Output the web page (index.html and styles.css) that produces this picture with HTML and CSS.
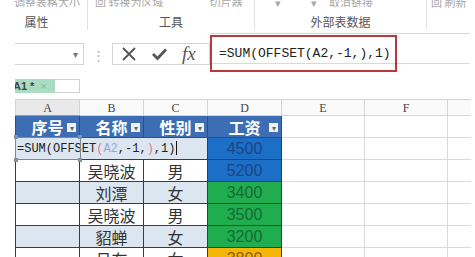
FILE: index.html
```html
<!DOCTYPE html>
<html lang="zh-cn">
<head>
    <meta charset="UTF-8">
    <title>OFFSET 求和</title>
    <link rel="stylesheet" href="styles.css">
</head>
<body>
    <div class="ribbon">
        <div class="grp g1"><div class="cmd">调整表格大小</div><div class="lbl">属性</div></div>
        <div class="grp g2"><div class="cmd"><span>回 转换为区域</span><span class="c2">切片器</span></div><div class="lbl">工具</div></div>
        <div class="grp g3"><div class="cmd"><span>▾</span><span class="c2">▾</span><span class="c3">取消链接</span></div><div class="lbl">外部表数据</div></div>
        <div class="grp g4"><div class="cmd">回 刷新</div><div class="lbl"></div></div>
    </div>

    <div class="fbar">
        <div class="namebox"><span class="arrow">▾</span></div>
        <div class="dots">⋮</div>
        <div class="fxbox">
            <svg class="ico-x" width="16" height="16" viewBox="0 0 16 16"><path d="M2 2 L14 14 M14 2 L2 14" stroke="#555" stroke-width="1.8" fill="none"/></svg>
            <svg class="ico-ok" width="17" height="14" viewBox="0 0 17 14"><path d="M2 7 L6.5 11.5 L15 2.5" stroke="#555" stroke-width="2.8" fill="none"/></svg>
            <span class="fx">fx</span>
        </div>
        <div class="finput">=SUM(OFFSET(A2,-1,),1)</div>
        <div class="mark"></div>
    </div>

    <div class="tabs">
        <div class="tab">A1 * <span class="close">×</span></div>
        <div class="tab-new"></div>
    </div>

    <table class="sheet">
        <colgroup>
            <col style="width:64px"><col style="width:64px"><col style="width:64px">
            <col style="width:74px"><col style="width:83px"><col style="width:83px"><col style="width:23px">
        </colgroup>
        <tr class="letters">
            <td class="cur">A</td><td>B</td><td>C</td><td>D</td><td>E</td><td>F</td><td class="edge"></td>
        </tr>
        <tr class="head">
            <td class="th">序号<span class="flt">▾</span></td>
            <td class="th">名称<span class="flt">▾</span></td>
            <td class="th">性别<span class="flt">▾</span></td>
            <td class="th">工资<span class="flt">▾</span></td>
            <td class="e"></td><td class="e"></td><td class="e edge"></td>
        </tr>
        <tr class="alt">
            <td class="editor" colspan="3">
                =SUM(OFFSET<span class="p">(</span><span class="ref">A2</span>,-1,<span class="p">)</span>,1)<span class="caret"></span>
                <span class="sel"></span>
                <i class="h h1"></i><i class="h h2"></i><i class="h h3"></i><i class="h h4"></i>
            </td>
            <td class="num blue">4500</td>
            <td class="e"></td><td class="e"></td><td class="e edge"></td>
        </tr>
        <tr>
            <td class="d"></td><td class="d">吴晓波</td><td class="d">男</td><td class="num blue">5200</td>
            <td class="e"></td><td class="e"></td><td class="e edge"></td>
        </tr>
        <tr class="alt">
            <td class="d"></td><td class="d">刘潭</td><td class="d">女</td><td class="num green">3400</td>
            <td class="e"></td><td class="e"></td><td class="e edge"></td>
        </tr>
        <tr>
            <td class="d"></td><td class="d">吴晓波</td><td class="d">男</td><td class="num green">3500</td>
            <td class="e"></td><td class="e"></td><td class="e edge"></td>
        </tr>
        <tr class="alt">
            <td class="d"></td><td class="d">貂蝉</td><td class="d">女</td><td class="num green">3200</td>
            <td class="e"></td><td class="e"></td><td class="e edge"></td>
        </tr>
        <tr>
            <td class="d"></td><td class="d">吕布</td><td class="d">女</td><td class="num orange">3800</td>
            <td class="e"></td><td class="e"></td><td class="e edge"></td>
        </tr>
    </table>
</body>
</html>
```

FILE: styles.css
```css
body {
    margin: 0;
    width: 475px;
    height: 257px;
    overflow: hidden;
    background: #fff;
    font-family: "Noto Sans CJK SC", "Noto Sans", sans-serif;
    color: #333;
}

/* ribbon */
.ribbon {
    display: flex;
    height: 33px;
}
.grp {
    display: flex;
    flex-direction: column;
    border-right: 1px solid #e3e3e3;
    height: 30px;
}
.g1 { width: 87px; }
.g2 { width: 166px; }
.g3 { width: 171px; }
.g4 { flex: 1; border-right: none; }
.cmd {
    height: 14px;
    margin-top: -5px;
    font-size: 11px;
    line-height: 14px;
    color: #a8a8a8;
    white-space: nowrap;
    overflow: hidden;
    padding-left: 14px;
}
.g2 .cmd { padding-left: 7px; }
.g2 .c2 { margin-left: 46px; }
.g3 .cmd { padding-left: 20px; }
.g3 .c2 { margin-left: 30px; }
.g3 .c3 { margin-left: 12px; }
.g4 .cmd { padding-left: 4px; }
.lbl {
    text-align: center;
    font-size: 12px;
    line-height: 16px;
    margin-top: 7px;
    color: #555;
}
.g1 .lbl { padding-right: 14px; }

/* formula bar */
.fbar {
    position: relative;
    display: flex;
    height: 40px;
}
.namebox {
    position: relative;
    margin: 10px 0 0 15px;
    width: 68px;
    height: 20px;
    border: 1px solid #d4d4d4;
    border-left: none;
}
.arrow {
    position: absolute;
    right: 5px;
    top: 2px;
    font-size: 10px;
    color: #777;
}
.dots {
    width: 28px;
    text-align: center;
    margin-top: 12px;
    font-size: 13px;
    color: #b0b0b0;
}
.fxbox {
    display: flex;
    align-items: center;
    margin-top: 10px;
    width: 96px;
    height: 20px;
    border: 1px solid #d4d4d4;
}
.ico-x { margin-left: 8px; }
.ico-ok { margin-left: 14px; }
.fx {
    margin-left: 14px;
    font-family: "Liberation Serif", serif;
    font-style: italic;
    font-size: 19px;
    color: #555;
}
.finput {
    flex: 1;
    margin-right: 5px;
    border-top: 1px solid #dadada;
    border-bottom: 1px solid #dadada;
    padding: 12px 0 0 9px;
    box-sizing: border-box;
    height: 31px;
    font-family: "Liberation Mono", monospace;
    font-size: 13px;
    line-height: 15px;
    color: #222;
}
.mark {
    position: absolute;
    left: 210px;
    top: 2px;
    width: 183px;
    height: 33px;
    border: 2px solid #b8383d;
}

/* sheet tab */
.tabs {
    display: flex;
    margin: 6px 0 0 15px;
    height: 14px;
}
.tab {
    width: 40px;
    background: #a9dcc1;
    font-family: "Liberation Sans", sans-serif;
    font-size: 11px;
    font-weight: bold;
    line-height: 14px;
    color: #444;
    white-space: nowrap;
    overflow: hidden;
    text-indent: -2px;
}
.close {
    font-weight: normal;
    color: #8fb3a3;
    margin-left: 3px;
}
.tab-new {
    width: 25px;
    border: 1px solid #d0d0d0;
    border-left: none;
    box-sizing: border-box;
}

/* grid */
.sheet {
    margin: 6px 0 0 15px;
    border-collapse: collapse;
    table-layout: fixed;
}
.sheet td {
    padding: 0;
    height: 21px;
    text-align: center;
    white-space: nowrap;
}
.sheet .letters td {
    height: 15px;
    font-family: "Liberation Serif", serif;
    font-size: 12px;
    line-height: 14px;
    color: #444;
    border: 1px solid #d4d4d4;
    background: #fafafa;
}
.sheet .letters td.cur {
    background: #e9e9e9;
    border-bottom: 1px solid #9a9a9a;
}
.sheet td.edge { border-right: none; }
.th {
    position: relative;
    background: #3d6db2;
    color: #fff;
    font-size: 16px;
    font-weight: bold;
    border: 1px solid #2c4f82;
    line-height: 20px;
}
.flt {
    position: absolute;
    right: 3px;
    top: 7px;
    width: 9px;
    height: 9px;
    background: #eef1f5;
    color: #666;
    font-size: 8px;
    line-height: 9px;
    font-weight: normal;
}
.e {
    border: 1px solid #dadada;
}
.d {
    border: 1px solid #3c3c3c;
    font-size: 16px;
    line-height: 20px;
}
.alt .d, .editor {
    background: #dce6f1;
}
.sheet .editor {
    position: relative;
    border: 1px solid #3c3c3c;
    text-align: left;
    padding-left: 1px;
    font-family: "Liberation Mono", monospace;
    font-size: 12px;
    color: #222;
}
.editor .p { color: #e27a92; }
.editor .ref { color: #9aa6cf; }
.caret {
    display: inline-block;
    width: 1px;
    height: 14px;
    margin-left: 1px;
    vertical-align: -3px;
    background: #111;
}
.sel {
    position: absolute;
    left: -1px;
    top: -1px;
    width: 64px;
    height: 21px;
    border: 1px solid #7e8a96;
}
.h {
    position: absolute;
    width: 4px;
    height: 4px;
    background: #7d93ad;
}
.h1 { left: -2px; top: -3px; }
.h2 { left: 62px; top: -3px; }
.h3 { left: -2px; bottom: -3px; }
.h4 { left: 62px; bottom: -3px; }
.num {
    border: 1px solid #3c3c3c;
    font-family: "Liberation Sans", sans-serif;
    font-size: 16px;
}
.blue { background: #1c6fc6; color: #1a4684; }
.green { background: #20ad50; color: #166a31; }
.orange { background: #f5b60a; color: #8a6100; }
```
